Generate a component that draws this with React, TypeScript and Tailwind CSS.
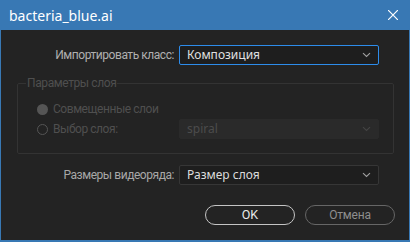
function Chevron({ color }: { color: string }) {
  return (
    <svg width="9" height="6" viewBox="0 0 9 6" fill="none">
      <path d="M1 1.2 L4.5 4.5 L8 1.2" stroke={color} strokeWidth="1.1" />
    </svg>
  );
}

function Select({ value, active, disabled }: { value: string; active?: boolean; disabled?: boolean }) {
  const box = active
    ? "border-[#2d8ceb] bg-[#1e1e1e] text-[#e0e0e0]"
    : disabled
      ? "border-[#2a2a2a] bg-[#2a2a2a] text-[#4c4c4c]"
      : "border-[#363636] bg-[#1e1e1e] text-[#dcdcdc]";
  return (
    <div className={`w-[200px] h-[20px] border rounded-[2px] flex items-center justify-between pl-[7px] pr-[7px] ${box}`}>
      <span className="text-[12px] leading-none" style={{ fontFamily: '"Noto Sans", sans-serif' }}>
        {value}
      </span>
      <Chevron color={disabled ? "#444444" : "#a0a0a0"} />
    </div>
  );
}

export default function App() {
  return (
    <div
      className="w-[410px] h-[242px] flex flex-col bg-[#3878b4] px-px pb-[2px]"
      style={{ fontFamily: 'Roboto, "Noto Sans", sans-serif' }}
    >
      {/* Title bar */}
      <div className="h-[30px] flex items-center justify-between pl-[8px] pr-[10px] shrink-0">
        <span className="text-[14px] text-white" style={{ fontFamily: '"Noto Sans", sans-serif' }}>
          bacteria_blue.ai
        </span>
        <svg width="10" height="10" viewBox="0 0 10 10" className="mr-[1px]">
          <path d="M0 0 L10 10 M10 0 L0 10" stroke="#ffffff" strokeWidth="1.2" />
        </svg>
      </div>

      {/* Body */}
      <div className="flex-1 bg-[#232323] pt-[15px]">
        <div className="flex items-center gap-[5px] h-[20px]">
          <span className="w-[173px] text-right text-[12px] tracking-[-0.45px] text-[#b0b0b0]">Импортировать класс:</span>
          <Select value="Композиция" active />
        </div>

        <fieldset className="ml-[16px] w-[377px] mt-[10px] border border-[#333333] rounded-[2px] pb-[14px]">
          <legend className="ml-[8px] px-[1px] text-[12px] tracking-[-0.4px] leading-[16px] text-[#4f4f4f]">Параметры слоя</legend>
          <div className="mt-[9px] h-[18px] flex items-center pl-[19px] gap-[5px]">
            <span className="w-[11px] h-[11px] rounded-full bg-[#555555]" />
            <span className="text-[12px] tracking-[-0.45px] text-[#4f4f4f]">Совмещенные слои</span>
          </div>
          <div className="mt-[1px] h-[20px] flex items-center pl-[19px]">
            <span className="w-[11px] h-[11px] rounded-full border border-[#555555]" />
            <span className="ml-[5px] w-[126px] text-[12px] tracking-[-0.45px] text-[#4f4f4f]">Выбор слоя:</span>
            <Select value="spiral" disabled />
          </div>
        </fieldset>

        <div className="mt-[11px] flex items-center gap-[5px] h-[20px]">
          <span className="w-[173px] text-right text-[12px] tracking-[-0.45px] text-[#a8a8a8]">Размеры видеоряда:</span>
          <Select value="Размер слоя" />
        </div>

        <div className="mt-[20px] flex justify-end gap-[10px] pr-[14px]">
          <button className="w-[90px] h-[20px] rounded-full border border-[#c4c4c4] text-[12.5px] text-[#e8e8e8] flex items-center justify-center">
            OK
          </button>
          <button className="w-[90px] h-[20px] rounded-full border border-[#666666] text-[12px] tracking-[-0.2px] text-[#8e8e8e] flex items-center justify-center">
            Отмена
          </button>
        </div>
      </div>
    </div>
  );
}
